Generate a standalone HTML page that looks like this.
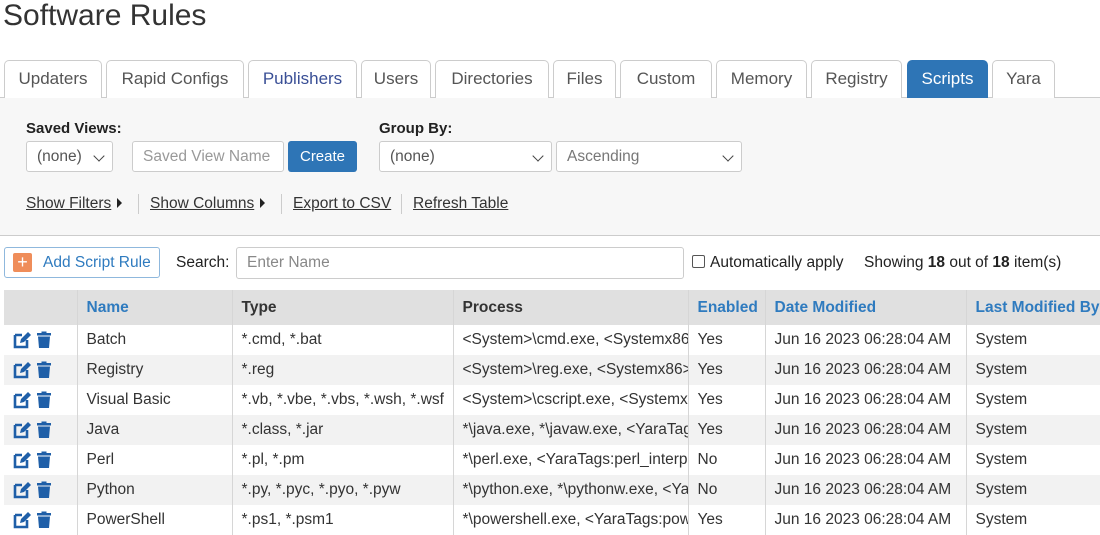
<!DOCTYPE html><html><head><style>
*{box-sizing:border-box}body{margin:0;width:1100px;height:531px;overflow:hidden;background:#fff;font-family:"Liberation Sans",sans-serif;color:#333;position:relative}
.a{position:absolute;white-space:nowrap}
.tab{position:absolute;top:60px;height:38px;border:1px solid #ccc;border-bottom:none;border-radius:5px 5px 0 0;background:#fff;font-size:17px;color:#555;text-align:center;line-height:36px}
.sel{position:absolute;height:31px;border:1px solid #ccc;border-radius:3px;background:#fff;font-size:15.5px;color:#555;line-height:29px;padding-left:10px}
.chev{position:absolute;right:9px;top:10px;width:8px;height:8px;border-right:1.5px solid #444;border-bottom:1.5px solid #444;transform:rotate(45deg)}
.lk{position:absolute;top:195px;font-size:15.5px;color:#333;text-decoration:underline}
.tri{display:inline-block;width:0;height:0;border-left:5px solid #222;border-top:5px solid transparent;border-bottom:5px solid transparent;margin-left:6px}
.sep{position:absolute;top:194px;width:1px;height:20px;background:#ccc}
table{position:absolute;left:4px;top:290px;width:1096px;border-collapse:collapse;font-size:15.5px;table-layout:fixed}
td,th{height:30px;padding:0 0 0 9px;white-space:nowrap;overflow:hidden;text-align:left;border-left:1px solid #d6d6d6}
th{height:35px;background:#e0e0e0;font-weight:bold;color:#333}
th.b{color:#2f7bbf}
tr:nth-child(odd) td{background:#f2f2f2}
td:first-child,th:first-child{border-left:none}
</style></head><body>
<div class="a" style="left:3px;top:-1px;font-size:30px;color:#333">Software Rules</div>
<div style="position:absolute;left:0;top:97px;width:1100px;height:139px;background:#f7f7f7;border-top:1px solid #ccc;border-bottom:1px solid #ccc"></div>
<div class="tab" style="left:4px;width:98px">Updaters</div>
<div class="tab" style="left:106px;width:138px">Rapid Configs</div>
<div class="tab" style="left:248px;width:109px;color:#3a4f96">Publishers</div>
<div class="tab" style="left:361px;width:70px">Users</div>
<div class="tab" style="left:435px;width:114px">Directories</div>
<div class="tab" style="left:553px;width:63px">Files</div>
<div class="tab" style="left:620px;width:92px">Custom</div>
<div class="tab" style="left:716px;width:91px">Memory</div>
<div class="tab" style="left:811px;width:91px">Registry</div>
<div class="tab" style="left:907px;width:81px;background:#2e75b6;border-color:#2e75b6;color:#fff">Scripts</div>
<div class="tab" style="left:992px;width:63px">Yara</div>
<div class="a" style="left:26px;top:120px;font-size:15px;font-weight:bold;color:#222">Saved Views:</div>
<div class="a" style="left:379px;top:120px;font-size:15px;font-weight:bold;color:#222">Group By:</div>
<div class="sel" style="left:26px;top:141px;width:87px">(none)<div class="chev"></div></div>
<div class="sel" style="left:132px;top:141px;width:152px;color:#999">Saved View Name</div>
<div class="a" style="left:288px;top:141px;width:69px;height:31px;background:#2e75b6;border-radius:3px;color:#fff;font-size:15px;text-align:center;line-height:31px">Create</div>
<div class="sel" style="left:379px;top:141px;width:173px">(none)<div class="chev"></div></div>
<div class="sel" style="left:556px;top:141px;width:186px;color:#777">Ascending<div class="chev"></div></div>
<div class="lk" style="left:26px">Show Filters<span class="tri"></span></div>
<div class="sep" style="left:138px"></div>
<div class="lk" style="left:150px">Show Columns<span class="tri"></span></div>
<div class="sep" style="left:281px"></div>
<div class="lk" style="left:293px">Export to CSV</div>
<div class="sep" style="left:401px"></div>
<div class="lk" style="left:413px">Refresh Table</div>
<div class="a" style="left:4px;top:247px;width:156px;height:31px;border:1px solid #8fb8dd;border-radius:3px;background:#fff"></div>
<div class="a" style="left:13px;top:253px;width:19px;height:19px;background:#ef8d5a;border-radius:2px;color:#fff;font-size:18px;line-height:18px;text-align:center">+</div>
<div class="a" style="left:43px;top:254px;font-size:15.5px;color:#2f7bbf">Add Script Rule</div>
<div class="a" style="left:176px;top:254px;font-size:15.5px;color:#222">Search:</div>
<div class="sel" style="left:236px;top:247px;width:448px;height:32px;color:#888">Enter Name</div>
<div class="a" style="left:692px;top:255px;width:13px;height:13px;border:1px solid #555;border-radius:2px"></div>
<div class="a" style="left:710px;top:254px;font-size:15.5px;color:#222">Automatically apply</div>
<div class="a" style="left:864px;top:254px;font-size:15.5px;color:#222">Showing <b>18</b> out of <b>18</b> item(s)</div>
<table>
<colgroup><col style="width:73px"><col style="width:155px"><col style="width:221px"><col style="width:235px"><col style="width:77px"><col style="width:201px"><col style="width:134px"></colgroup>
<tr><th></th><th class="b">Name</th><th>Type</th><th>Process</th><th class="b">Enabled</th><th class="b">Date Modified</th><th class="b">Last Modified By</th></tr>
<tr><td>I</td><td>Batch</td><td>*.cmd, *.bat</td><td>&lt;System&gt;\cmd.exe, &lt;Systemx86&gt;</td><td>Yes</td><td>Jun 16 2023 06:28:04 AM</td><td>System</td></tr>
<tr><td>I</td><td>Registry</td><td>*.reg</td><td>&lt;System&gt;\reg.exe, &lt;Systemx86&gt;</td><td>Yes</td><td>Jun 16 2023 06:28:04 AM</td><td>System</td></tr>
<tr><td>I</td><td>Visual Basic</td><td>*.vb, *.vbe, *.vbs, *.wsh, *.wsf</td><td>&lt;System&gt;\cscript.exe, &lt;Systemx</td><td>Yes</td><td>Jun 16 2023 06:28:04 AM</td><td>System</td></tr>
<tr><td>I</td><td>Java</td><td>*.class, *.jar</td><td>*\java.exe, *\javaw.exe, &lt;YaraTag</td><td>Yes</td><td>Jun 16 2023 06:28:04 AM</td><td>System</td></tr>
<tr><td>I</td><td>Perl</td><td>*.pl, *.pm</td><td>*\perl.exe, &lt;YaraTags:perl_interp</td><td>No</td><td>Jun 16 2023 06:28:04 AM</td><td>System</td></tr>
<tr><td>I</td><td>Python</td><td>*.py, *.pyc, *.pyo, *.pyw</td><td>*\python.exe, *\pythonw.exe, &lt;Ya</td><td>No</td><td>Jun 16 2023 06:28:04 AM</td><td>System</td></tr>
<tr><td>I</td><td>PowerShell</td><td>*.ps1, *.psm1</td><td>*\powershell.exe, &lt;YaraTags:pow</td><td>Yes</td><td>Jun 16 2023 06:28:04 AM</td><td>System</td></tr>
</table>
<script>
document.querySelectorAll('td:first-child').forEach(function(t){t.innerHTML='<svg width="40" height="18" viewBox="0 0 40 18" style="vertical-align:middle;margin-left:0"><path d="M2 4h7M2 4v12h12v-7" fill="none" stroke="#1f5fa8" stroke-width="2.6"/><path d="M7 12l1-4 7-7 3 3-7 7z" fill="#1f5fa8"/><rect x="24" y="2" width="14" height="2.5" fill="#1f5fa8"/><rect x="28.5" y="0.5" width="5" height="2" fill="#1f5fa8"/><path d="M25 5.5h12l-1 11.5h-10z" fill="#1f5fa8"/></svg>';});
</script>
</body></html>
